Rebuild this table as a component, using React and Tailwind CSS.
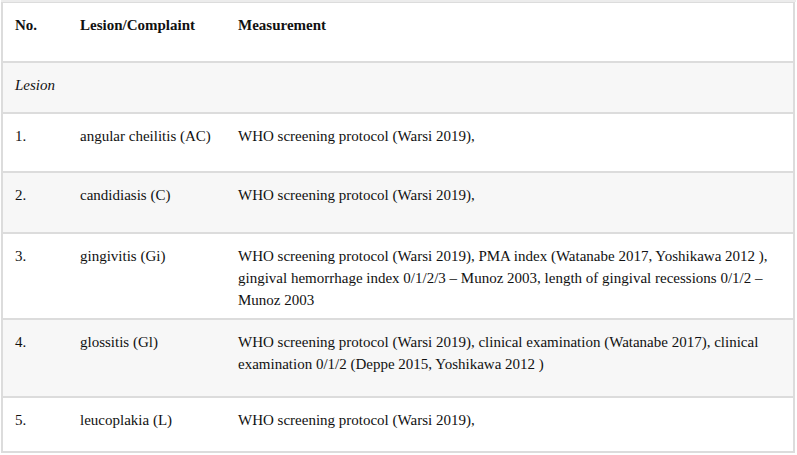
const ROWS = [
  { no: '1.', lesion: 'angular cheilitis (AC)', measure: 'WHO screening protocol (Warsi 2019),', h: 'h-[59px]', bg: 'bg-white' },
  { no: '2.', lesion: 'candidiasis (C)', measure: 'WHO screening protocol (Warsi 2019),', h: 'h-[61px]', bg: 'bg-[#f7f7f7]' },
  {
    no: '3.',
    lesion: 'gingivitis (Gi)',
    measure: 'WHO screening protocol (Warsi 2019), PMA index (Watanabe 2017, Yoshikawa 2012 ), gingival hemorrhage index 0/1/2/3 – Munoz 2003, length of gingival recessions 0/1/2 – Munoz 2003',
    h: 'h-[86px]',
    bg: 'bg-white',
  },
  {
    no: '4.',
    lesion: 'glossitis (Gl)',
    measure: 'WHO screening protocol (Warsi 2019), clinical examination (Watanabe 2017), clinical examination 0/1/2 (Deppe 2015, Yoshikawa 2012 )',
    h: 'h-[78px]',
    bg: 'bg-[#f7f7f7]',
  },
  { no: '5.', lesion: 'leucoplakia (L)', measure: 'WHO screening protocol (Warsi 2019),', h: 'h-[55px]', bg: 'bg-white' },
];

export default function App() {
  return (
    <div className="w-[797px] h-[455px] bg-white pl-[1px] pr-[1px] font-['Liberation_Serif',serif] text-[15px] leading-[22px] text-[#111]">
      <div className="h-[2px] bg-[#ececec]" />
      <table className="w-[794px] border-collapse border-2 border-t border-[#dcdcdc] table-fixed">
        <colgroup>
          <col className="w-[66px]" />
          <col className="w-[158px]" />
          <col />
        </colgroup>
        <thead>
          <tr className="h-[59px] bg-white border-b-2 border-[#dcdcdc]">
            <th className="text-left align-top font-bold pl-[12px] pt-[11px]">No.</th>
            <th className="text-left align-top font-bold pl-[12px] pt-[11px]">Lesion/Complaint</th>
            <th className="text-left align-top font-bold pl-[12px] pt-[11px]">Measurement</th>
          </tr>
        </thead>
        <tbody>
          <tr className="h-[51px] bg-[#f7f7f7] border-b-2 border-[#dcdcdc]">
            <td colSpan={3} className="align-top italic pl-[12px] pt-[11px]">Lesion</td>
          </tr>
          {ROWS.map((r) => (
            <tr key={r.no} className={`${r.h} ${r.bg} border-b-2 border-[#dcdcdc]`}>
              <td className="align-top pl-[12px] pt-[11px]">{r.no}</td>
              <td className="align-top pl-[12px] pt-[11px]">{r.lesion}</td>
              <td className="align-top pl-[12px] pr-[8px] pt-[11px]">{r.measure}</td>
            </tr>
          ))}
        </tbody>
      </table>
    </div>
  );
}
